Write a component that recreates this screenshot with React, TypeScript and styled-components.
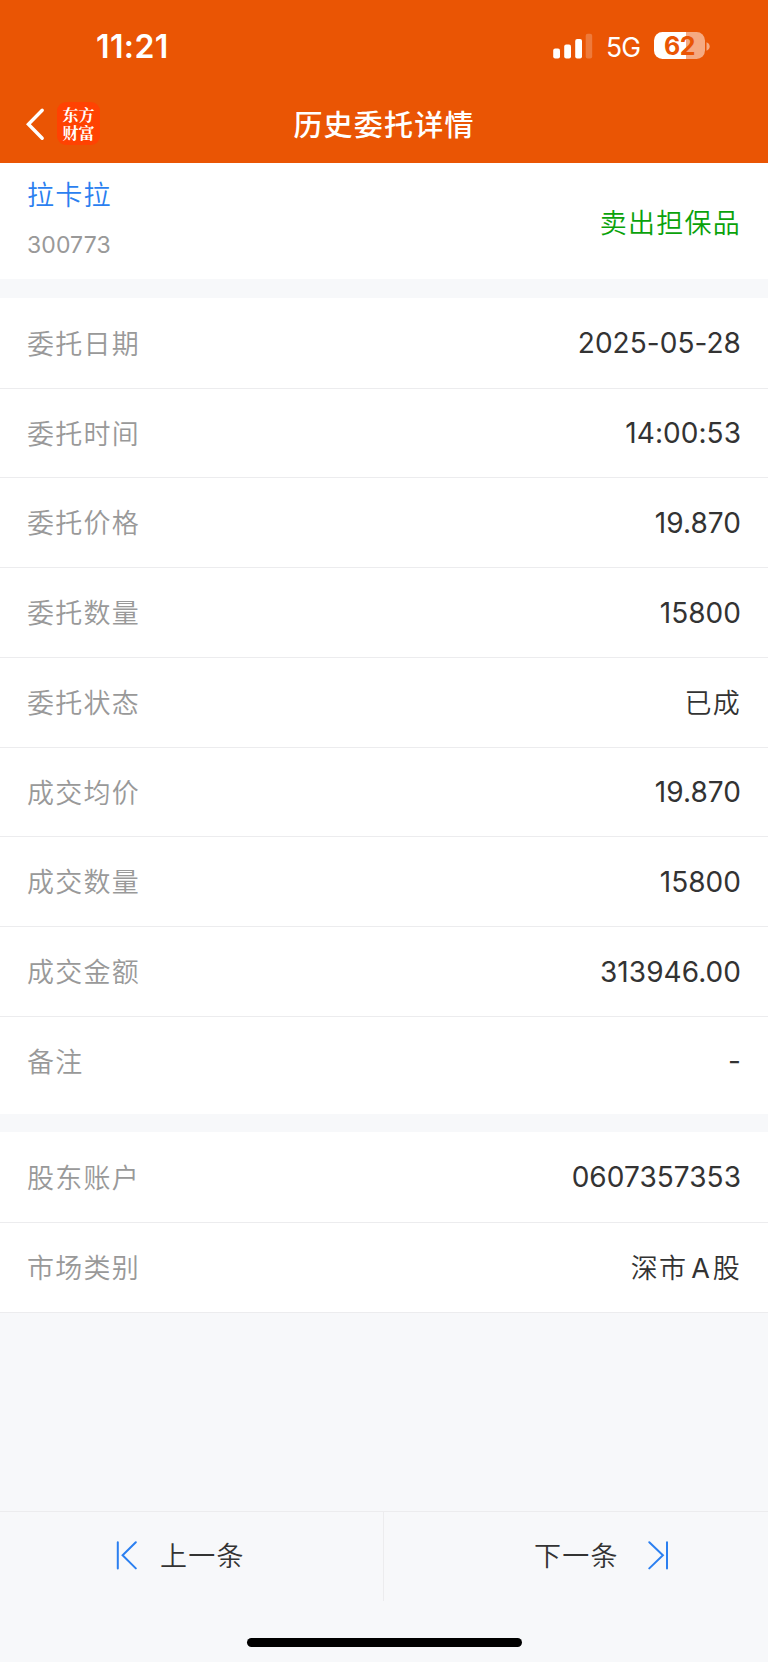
import React from 'react';
import styled, { createGlobalStyle } from 'styled-components';

const GlobalStyle = createGlobalStyle`
  * { box-sizing: border-box; }
  body {
    margin: 0;
    background: #f7f8fa;
    font-family: Inter, 'Noto Sans CJK SC', sans-serif;
    color: #333;
  }
`;

const Screen = styled.div`
  width: 768px;
  height: 1662px;
  display: flex;
  flex-direction: column;
  background: #f7f8fa;
  overflow: hidden;
`;

const Header = styled.header`
  height: 163.4px;
  flex: none;
  background: #ea5504;
  color: #fff;
`;

const StatusBar = styled.div`
  height: 92px;
  padding: 0 58px 0 96px;
  display: flex;
  align-items: center;
  justify-content: space-between;
`;

const Clock = styled.span`
  margin-top: 2px;
  font-size: 32px;
  font-weight: 600;
  line-height: 40px;
  letter-spacing: 0.4px;
`;

const StatusIcons = styled.div`
  display: flex;
  align-items: center;
`;

const SignalIcon = styled.svg`
  width: 40px;
  height: 26px;
`;

const Network = styled.span`
  width: 36px;
  margin: 2px 0 0 13px;
  font-size: 26.5px;
  font-weight: 400;
  line-height: 32px;
  letter-spacing: -0.8px;
`;

const Battery = styled.div`
  width: 51px;
  height: 27px;
  margin: -1px 0 0 12px;
  border-radius: 8.5px;
  background: linear-gradient(90deg, #fff 62%, #f5aa82 62%);
  color: #ea5504;
  font-size: 25px;
  font-weight: 700;
  line-height: 28px;
  text-align: center;
  letter-spacing: -0.6px;
`;

const BatteryTip = styled.svg`
  width: 4px;
  height: 9px;
  margin-left: 1px;
`;

const NavBar = styled.div`
  height: 65px;
  padding: 0 26px;
  display: grid;
  grid-template-columns: 120px 1fr 120px;
  align-items: center;
`;

const NavLeft = styled.div`
  display: flex;
  align-items: center;
  margin-top: -2px;
`;

const BackIcon = styled.svg`
  width: 19px;
  height: 34px;
`;

const Logo = styled.div`
  width: 43px;
  height: 43px;
  margin-left: 12px;
  display: flex;
  flex-direction: column;
  align-items: center;
  justify-content: center;
  gap: 2px;
  border-radius: 9px;
  background: #ff4202;
`;

const LogoLine = styled.span`
  height: 16px;
  font-family: 'Noto Serif CJK SC', 'Noto Sans CJK SC', sans-serif;
  font-size: 16px;
  font-weight: 700;
  line-height: 16px;
`;

const Title = styled.h1`
  margin: 2px 0 0;
  font-size: 29px;
  font-weight: 500;
  line-height: 40px;
  letter-spacing: 1.2px;
  text-align: center;
`;

const Panel = styled.section`
  flex: none;
  background: #fff;
`;

const Stock = styled(Panel)`
  height: 115.6px;
  padding: 0 27px 0 27px;
  display: flex;
  justify-content: space-between;
`;

const StockName = styled.div`
  margin-top: 13px;
  color: #2b7ff0;
  font-size: 27px;
  font-weight: 350;
  line-height: 40px;
  letter-spacing: 1.3px;
`;

const StockCode = styled.div`
  margin-top: 13px;
  color: #999;
  font-size: 23px;
  line-height: 32px;
  letter-spacing: 0.1px;
`;

const Side = styled.div`
  margin-top: 41px;
  color: #0aa20a;
  font-size: 27px;
  font-weight: 350;
  line-height: 40px;
  letter-spacing: 1.25px;
`;

const Details = styled(Panel)<{ $top: number; $bottom: number }>`
  margin-top: ${(p) => p.$top}px;
  padding-top: 1px;
  padding-bottom: ${(p) => p.$bottom}px;
`;

const Row = styled.div<{ $last?: boolean }>`
  height: 89.75px;
  padding: 2px 27px 0;
  display: flex;
  align-items: center;
  justify-content: space-between;
  border-bottom: 1px solid ${(p) => (p.$last ? 'transparent' : '#ececee')};
`;

const Label = styled.span`
  padding-top: 1px;
  color: #999;
  font-size: 27px;
  font-weight: 350;
  line-height: 40px;
  letter-spacing: 1.25px;
`;

const Value = styled.span<{ $cjk?: boolean }>`
  padding: ${(p) => (p.$cjk ? '1px 0 0' : '0 0 2px')};
  color: #333;
  font-size: ${(p) => (p.$cjk ? 27 : 28)}px;
  font-weight: ${(p) => (p.$cjk ? 350 : 400)};
  line-height: 40px;
  letter-spacing: ${(p) => (p.$cjk ? 1.2 : 0.05)}px;
`;

const Latin = styled.span`
  margin: 0 3px 0 4px;
  font-size: 27px;
  font-weight: 400;
  letter-spacing: 0;
`;

const Pager = styled.nav`
  height: 151px;
  margin-top: auto;
  flex: none;
  display: grid;
  grid-template-columns: 384px 1fr;
  grid-template-rows: 89px 1fr;
  border-top: 1px solid #ececee;
`;

const PageButton = styled.button<{ $pad: number; $divider?: boolean }>`
  padding: 0 0 0 ${(p) => p.$pad}px;
  display: flex;
  align-items: center;
  border: 0;
  border-right: ${(p) => (p.$divider ? '1px solid #ececee' : '0')};
  background: none;
  color: #333;
  font-family: inherit;
  font-size: 27px;
  font-weight: 350;
  line-height: 40px;
  letter-spacing: 1.2px;
`;

const PageIcon = styled.svg`
  width: 22px;
  height: 30px;
  margin-bottom: 3px;
`;

const PageText = styled.span<{ $left?: number; $right?: number }>`
  margin: 0 ${(p) => p.$right ?? 0}px 0 ${(p) => p.$left ?? 0}px;
`;

const HomeArea = styled.div`
  grid-column: 1 / -1;
  padding-top: 37px;
  display: flex;
  justify-content: center;
  align-items: flex-start;
`;

const HomeIndicator = styled.div`
  width: 275px;
  height: 9px;
  border-radius: 5px;
  background: #000;
`;

type Item = { label: string; value: React.ReactNode; cjk?: boolean };

const orderRows: Item[] = [
  { label: '委托日期', value: '2025-05-28' },
  { label: '委托时间', value: '14:00:53' },
  { label: '委托价格', value: '19.870' },
  { label: '委托数量', value: '15800' },
  { label: '委托状态', value: '已成', cjk: true },
  { label: '成交均价', value: '19.870' },
  { label: '成交数量', value: '15800' },
  { label: '成交金额', value: '313946.00' },
  { label: '备注', value: '-' },
];

const accountRows: Item[] = [
  { label: '股东账户', value: '0607357353' },
  { label: '市场类别', value: <>深市<Latin>A</Latin>股</>, cjk: true },
];

function Rows({ rows, openEnd }: { rows: Item[]; openEnd?: boolean }) {
  return (
    <>
      {rows.map(({ label, value, cjk }, i) => (
        <Row key={label} $last={openEnd && i === rows.length - 1}>
          <Label>{label}</Label>
          <Value $cjk={cjk}>{value}</Value>
        </Row>
      ))}
    </>
  );
}

export default function App() {
  return (
    <>
      <GlobalStyle />
      <Screen>
        <Header>
          <StatusBar>
            <Clock>11:21</Clock>
            <StatusIcons>
              <SignalIcon viewBox="0 0 40 26" fill="#fff">
                <rect x="0.2" y="15.6" width="6.8" height="9.9" rx="2" />
                <rect x="11.2" y="11.6" width="6.8" height="13.9" rx="2" />
                <rect x="22.2" y="6" width="6.8" height="19.5" rx="2" />
                <rect x="32.7" y="0.7" width="6.5" height="24.8" rx="2" opacity="0.22" />
              </SignalIcon>
              <Network>5G</Network>
              <Battery>62</Battery>
              <BatteryTip viewBox="0 0 4 9">
                <path d="M0.5 0.3C2.4 0.9 3.7 2.5 3.7 4.5S2.4 8.1 0.5 8.7Z" fill="#f5aa82" />
              </BatteryTip>
            </StatusIcons>
          </StatusBar>
          <NavBar>
            <NavLeft>
              <BackIcon viewBox="0 0 19 34" fill="none" stroke="#fff" strokeWidth="3.4" strokeLinecap="round">
                <path d="M16.2 3.2L2.4 17.2L16.2 31.2" />
              </BackIcon>
              <Logo>
                <LogoLine>东方</LogoLine>
                <LogoLine>财富</LogoLine>
              </Logo>
            </NavLeft>
            <Title>历史委托详情</Title>
          </NavBar>
        </Header>

        <Stock>
          <div>
            <StockName>拉卡拉</StockName>
            <StockCode>300773</StockCode>
          </div>
          <Side>卖出担保品</Side>
        </Stock>

        <Details $top={19} $bottom={7.3}>
          <Rows rows={orderRows} openEnd />
        </Details>
        <Details $top={18} $bottom={0}>
          <Rows rows={accountRows} />
        </Details>

        <Pager>
          <PageButton $pad={115} $divider>
            <PageIcon viewBox="0 0 22 30" fill="none" stroke="#2b7ff0" strokeWidth="2" strokeLinecap="round">
              <path d="M2.8 2.2V28.4M20.8 2.2L7.6 15.3L20.8 28.4" />
            </PageIcon>
            <PageText $left={23}>上一条</PageText>
          </PageButton>
          <PageButton $pad={150}>
            <PageText $right={29}>下一条</PageText>
            <PageIcon viewBox="0 0 22 30" fill="none" stroke="#2b7ff0" strokeWidth="2" strokeLinecap="round">
              <path d="M1.3 2.2L14.9 15.3L1.3 28.4M19 2.2V28.4" />
            </PageIcon>
          </PageButton>
          <HomeArea>
            <HomeIndicator />
          </HomeArea>
        </Pager>
      </Screen>
    </>
  );
}
